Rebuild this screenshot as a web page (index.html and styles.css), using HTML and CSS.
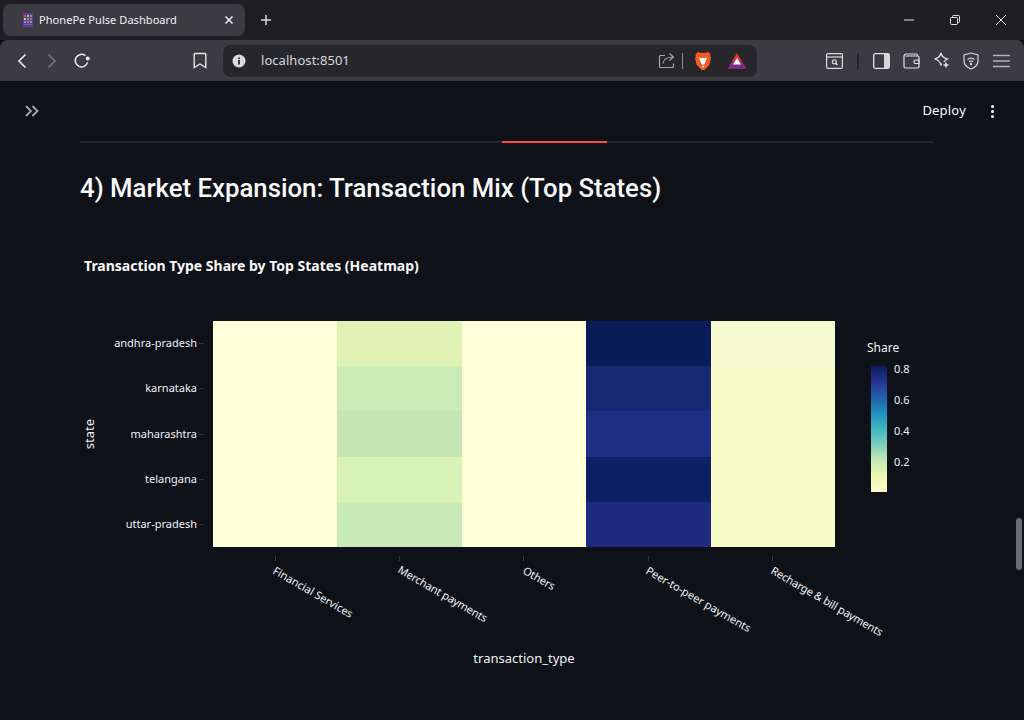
FILE: index.html
```html
<!DOCTYPE html>
<html lang="en">
<head>
    <meta charset="UTF-8">
    <meta name="viewport" content="width=device-width, initial-scale=1.0">
    <title>PhonePe Pulse Dashboard</title>
    <link rel="stylesheet" href="styles.css">
</head>
<body>

    <div class="tabstrip">
        <div class="tab">
            <svg class="favicon" width="12" height="16" viewBox="0 0 12 16">
                <rect x="1" y="1" width="10" height="14" fill="#5b3f96"/>
                <rect x="2" y="3" width="2" height="2" fill="#e8503a"/>
                <rect x="5" y="3" width="2" height="2" fill="#f0a030"/>
                <rect x="8" y="3" width="2" height="2" fill="#4aa0e0"/>
                <rect x="2" y="6" width="2" height="2" fill="#f0c030"/>
                <rect x="5" y="6" width="2" height="2" fill="#3fb0d0"/>
                <rect x="8" y="6" width="2" height="2" fill="#e8603a"/>
                <rect x="2" y="9" width="2" height="2" fill="#40a8e8"/>
                <rect x="5" y="9" width="2" height="2" fill="#e85a8a"/>
                <rect x="8" y="9" width="2" height="2" fill="#58c070"/>
                <rect x="2" y="12" width="8" height="1" fill="#7a5cb8"/>
            </svg>
            <span class="tab-title">PhonePe Pulse Dashboard</span>
            <svg class="tab-close" width="10" height="10" viewBox="0 0 10 10"><path d="M1.5 1.5l7 7M8.5 1.5l-7 7" stroke="#e8e8ea" stroke-width="1.6"/></svg>
        </div>
        <svg class="new-tab" width="12" height="12" viewBox="0 0 12 12"><path d="M6 1v10M1 6h10" stroke="#dcdcdf" stroke-width="1.5"/></svg>
        <div class="window-btns">
            <svg width="12" height="12" viewBox="0 0 12 12"><path d="M1 6h10" stroke="#e4e4e6" stroke-width="1"/></svg>
            <svg width="12" height="12" viewBox="0 0 12 12" fill="none" stroke="#e4e4e6"><rect x="1.5" y="3.5" width="7" height="7" rx="1"/><path d="M3.5 3.5v-1a1 1 0 0 1 1-1h5a1 1 0 0 1 1 1v5a1 1 0 0 1-1 1h-1"/></svg>
            <svg width="12" height="12" viewBox="0 0 12 12"><path d="M1 1l10 10M11 1L1 11" stroke="#e4e4e6" stroke-width="1"/></svg>
        </div>
    </div>

    <div class="toolbar">
        <div class="nav-btns">
            <svg width="10" height="16" viewBox="0 0 10 16" fill="none"><path d="M8.5 1.5L2 8l6.5 6.5" stroke="#eeeef0" stroke-width="1.6"/></svg>
            <svg width="10" height="16" viewBox="0 0 10 16" fill="none"><path d="M1.5 1.5L8 8l-6.5 6.5" stroke="#77777c" stroke-width="1.6"/></svg>
            <svg class="reload" width="18" height="18" viewBox="0 0 18 18" fill="none"><path d="M14.6 10.4A6.3 6.3 0 1 1 12.4 3.6" stroke="#eeeef0" stroke-width="1.5"/><circle cx="14.7" cy="6.5" r="2" fill="#eeeef0"/></svg>
        </div>
        <svg class="bookmark" width="14" height="17" viewBox="0 0 14 17" fill="none"><path d="M2 1.5h10a.8.8 0 0 1 .8.8v13.2L7 12l-5.800 3.500V2.300a.8.8 0 0 1 .8-.8z" stroke="#e4e4e6" stroke-width="1.4"/></svg>
        <div class="address">
            <svg width="14" height="14" viewBox="0 0 14 14"><circle cx="7" cy="7" r="6.500" fill="#dcdcdf"/><rect x="6.100" y="6" width="1.800" height="4.500" fill="#2a2a2f"/><rect x="6.100" y="3.400" width="1.800" height="1.700" fill="#2a2a2f"/></svg>
            <span class="url">localhost:8501</span>
            <svg class="share" width="17" height="17" viewBox="0 0 17 17" fill="none" stroke="#a6a6aa" stroke-width="1.200"><path d="M7 3.500H2.500a1 1 0 0 0-1 1v10a1 1 0 0 0 1 1h12a1 1 0 0 0 1-1v-3"/><path d="M5 11.500c.5-4 3.500-6.500 10-6.500M11.500 1.500L15.500 5l-4 3.500"/></svg>
            <span class="addr-sep"></span>
            <svg class="brave" width="18" height="20" viewBox="0 0 18 20">
                <path d="M3.500 1L6 1.800h6L14.500 1l2 2.500-.4 1.500.9 1.800-1.500 7L10.500 19H7.500L2.500 13.800 1 6.800 1.900 5 1.500 3.500z" fill="#f15a22"/>
                <path d="M5 6.500l2.500.8L9 6.800l1.500.5 2.500-.8-1 3-1.500 3.500L9 14l-1.500-1-1.500-3.500z" fill="#fff"/>
                <path d="M7.500 15.500L9 14.500l1.500 1L9 16.800z" fill="#fff"/>
            </svg>
            <svg class="bat" width="18" height="16" viewBox="0 0 18 16">
                <path d="M9 0L18 15.500H0z" fill="#e0362c"/>
                <path d="M0 15.500L4.500 8 9 11l4.500-3L18 15.500z" fill="#7b2d8e"/>
                <path d="M9 5l4 6.500H5z" fill="#fff"/>
            </svg>
        </div>
        <div class="tool-icons">
            <svg width="17" height="16" viewBox="0 0 17 16" fill="none" stroke="#dcdcdf" stroke-width="1.200"><rect x=".6" y=".6" width="15.800" height="14.800" rx="1.500"/><path d="M.6 4h15.800"/><circle cx="8.300" cy="8.800" r="2"/><path d="M9.800 10.300l1.700 1.700" stroke-width="1.500"/></svg>
            <span class="tool-sep"></span>
            <svg width="17" height="16" viewBox="0 0 17 16"><rect x=".7" y=".7" width="15.600" height="14.600" rx="1.500" fill="none" stroke="#e4e4e6" stroke-width="1.300"/><rect x="11" y="1" width="5" height="14" fill="#d6d6d8"/></svg>
            <svg width="17" height="16" viewBox="0 0 17 16" fill="none" stroke="#e4e4e6" stroke-width="1.200"><path d="M2.500 3h12a1.500 1.500 0 0 1 1.500 1.500v9a1.500 1.500 0 0 1-1.500 1.500h-12A1.500 1.500 0 0 1 1 13.500V3a2 2 0 0 1 2-2h10a1.500 1.500 0 0 1 1.500 1.500"/><rect x="11" y="7" width="5" height="3.500" rx="1.500"/></svg>
            <svg width="17" height="17" viewBox="0 0 17 17" fill="none" stroke="#e4e4e6" stroke-width="1.200"><path d="M8 1c.8 3.500 2.500 5.200 6.500 6-2 1-3 1.700-3.700 3M8 1C7.200 4.500 5.500 6.200 1.500 7c4 .8 5.700 2.500 6.500 6.500.2-.8.400-1.500.6-2"/><path d="M13 10.500v5M10.500 13h5" stroke-width="1.600"/></svg>
            <svg width="16" height="18" viewBox="0 0 16 18" fill="none" stroke="#d4d4d6" stroke-width="1.200"><path d="M8 1l7 2v6c0 4-3 6.500-7 8-4-1.500-7-4-7-8V3z"/><path d="M4.500 7.500c2-1.600 5-1.600 7 0M6 9.700c1.200-.9 2.800-.9 4 0"/><circle cx="8" cy="12" r=".6" fill="#d4d4d6"/></svg>
            <svg class="menu-icon" width="17" height="14" viewBox="0 0 17 14"><path d="M0 1.500h17M0 7h17M0 12.500h17" stroke="#b4b4b8" stroke-width="1.600"/></svg>
        </div>
    </div>

    <div class="page">
        <div class="st-header">
            <svg width="16" height="12" viewBox="0 0 16 12" fill="none" stroke="#a6a8ad" stroke-width="1.800"><path d="M2 1l5 5-5 5M8.500 1l5 5-5 5"/></svg>
            <div class="st-actions">
                <span class="deploy">Deploy</span>
                <span class="kebab"><i></i><i></i><i></i></span>
            </div>
        </div>

        <div class="main">
            <div class="divider"><span class="divider-red"></span></div>
            <h2 class="section-title">4) Market Expansion: Transaction Mix (Top States)</h2>

            <svg class="chart" width="854" height="450" viewBox="80 230 854 450">
                <defs>
                    <linearGradient id="ylgnbu" x1="0" y1="1" x2="0" y2="0">
                        <stop offset="0" stop-color="#f8fccb"/>
                        <stop offset="0.125" stop-color="#edf8b1"/>
                        <stop offset="0.25" stop-color="#c7e9b4"/>
                        <stop offset="0.375" stop-color="#7fcdbb"/>
                        <stop offset="0.5" stop-color="#41b6c4"/>
                        <stop offset="0.625" stop-color="#1d91c0"/>
                        <stop offset="0.75" stop-color="#225ea8"/>
                        <stop offset="0.875" stop-color="#253494"/>
                        <stop offset="1" stop-color="#081d58"/>
                    </linearGradient>
                </defs>

                <text class="chart-title" x="84" y="271">Transaction Type Share by Top States (Heatmap)</text>

                <!-- column 1 -->
                <rect x="213" y="321" width="124" height="226" fill="#ffffd9"/>
                <!-- column 2 -->
                <rect x="337" y="321" width="125" height="45" fill="#dff2b3"/>
                <rect x="337" y="366" width="125" height="45" fill="#ccecb6"/>
                <rect x="337" y="411" width="125" height="46" fill="#c5e6b3"/>
                <rect x="337" y="457" width="125" height="45" fill="#d8f2b5"/>
                <rect x="337" y="502" width="125" height="45" fill="#c8eab7"/>
                <!-- column 3 -->
                <rect x="462" y="321" width="124" height="226" fill="#ffffd9"/>
                <!-- column 4 -->
                <rect x="586" y="321" width="125" height="45" fill="#081d58"/>
                <rect x="586" y="366" width="125" height="45" fill="#172973"/>
                <rect x="586" y="411" width="125" height="46" fill="#1e2f86"/>
                <rect x="586" y="457" width="125" height="45" fill="#0c2163"/>
                <rect x="586" y="502" width="125" height="45" fill="#1e2b81"/>
                <!-- column 5 -->
                <rect x="711" y="321" width="124" height="45" fill="#f7fbd0"/>
                <rect x="711" y="366" width="124" height="181" fill="#f8fcc9"/>

                <!-- y axis -->
                <g class="ticks">
                    <path d="M199 343.500h5M199 388.500h5M199 434.500h5M199 479.500h5M199 524.500h5"/>
                    <path d="M275.500 556v5M399.500 556v5M523.500 556v5M648.500 556v5M772.500 556v5"/>
                </g>
                <g class="tick-labels" text-anchor="end">
                    <text x="197" y="347">andhra-pradesh</text>
                    <text x="197" y="392">karnataka</text>
                    <text x="197" y="438">maharashtra</text>
                    <text x="197" y="483">telangana</text>
                    <text x="197" y="528">uttar-pradesh</text>
                </g>
                <text class="axis-label" transform="translate(94 434) rotate(-90)" text-anchor="middle">state</text>

                <!-- x axis -->
                <g class="tick-labels">
                    <text transform="translate(272 573) rotate(30)">Financial Services</text>
                    <text transform="translate(397 572) rotate(30)" textLength="101">Merchant payments</text>
                    <text transform="translate(522 573) rotate(30)" textLength="35">Others</text>
                    <text transform="translate(645 573) rotate(30)">Peer-to-peer payments</text>
                    <text transform="translate(770 573) rotate(30)" textLength="127">Recharge &amp; bill payments</text>
                </g>
                <text class="axis-label" x="524" y="663" text-anchor="middle">transaction_type</text>

                <!-- colorbar -->
                <text class="legend-title" x="867" y="352">Share</text>
                <rect x="871" y="366" width="16" height="126" fill="url(#ylgnbu)"/>
                <g class="tick-labels">
                    <text x="894" y="373">0.8</text>
                    <text x="894" y="404">0.6</text>
                    <text x="894" y="435">0.4</text>
                    <text x="894" y="466">0.2</text>
                </g>
            </svg>
        </div>

        <div class="scroll-thumb"></div>
    </div>

</body>
</html>
```

FILE: styles.css
```css
html, body {
    margin: 0;
    padding: 0;
    height: 720px;
    overflow: hidden;
    background-color: #0e1117;
    font-family: "Noto Sans", sans-serif;
}
.tabstrip {
    height: 40px;
    background-color: #1f1f23;
    display: flex;
    align-items: center;
    box-sizing: border-box;
    padding-left: 3px;
}
.tab {
    width: 242px;
    height: 32px;
    box-sizing: border-box;
    background-color: #3b3b41;
    border-radius: 8px;
    display: flex;
    align-items: center;
    padding: 0 11px 0 19px;
    color: #f0f0f2;
}
.tab-title {
    margin-left: 5px;
    padding-bottom: 2px;
    font-size: 11px;
    letter-spacing: .06px;
    flex: 1;
}
.new-tab {
    margin-left: 15px;
}
.window-btns {
    margin-left: auto;
    display: flex;
    gap: 34px;
    padding-right: 17px;
}
.toolbar {
    height: 41px;
    box-sizing: border-box;
    background-color: #3b3b41;
    border-radius: 8px 8px 0 0;
    display: flex;
    align-items: center;
    position: relative;
}
.nav-btns {
    display: flex;
    align-items: center;
    gap: 20px;
    padding-left: 17px;
}
.nav-btns .reload {
    margin-left: -4px;
}
.bookmark {
    margin-left: 102px;
}
.address {
    margin-left: 16px;
    width: 534px;
    height: 32px;
    box-sizing: border-box;
    background-color: #26262b;
    border-radius: 8px;
    display: flex;
    align-items: center;
    padding-left: 9px;
}
.url {
    margin-left: 15px;
    padding-bottom: 2px;
    font-size: 13px;
    color: #d8d8da;
    flex: 1;
    letter-spacing: .05px;
}
.share {
    margin-right: 7px;
}
.addr-sep {
    width: 1px;
    height: 16px;
    background-color: #8a8a8e;
    margin-right: 11px;
}
.brave {
    margin-right: 16px;
}
.bat {
    margin-right: 11px;
}
.tool-icons {
    margin-left: 69px;
    display: flex;
    align-items: center;
    gap: 13px;
}
.tool-sep {
    width: 2px;
    height: 16px;
    background-color: #232327;
    margin: 0 1px;
}
.menu-icon {
    margin-left: 1px;
}
.page {
    height: 639px;
    background-color: #0e1117;
    position: relative;
    overflow: hidden;
}
.st-header {
    height: 60px;
    box-sizing: border-box;
    display: flex;
    align-items: center;
    padding: 0 30px 0 24px;
}
.st-actions {
    margin-left: auto;
    display: flex;
    align-items: center;
    gap: 25px;
}
.deploy {
    font-size: 13px;
    letter-spacing: .2px;
    padding-bottom: 2px;
    color: #fafafa;
}
.kebab {
    display: flex;
    flex-direction: column;
    gap: 2px;
}
.kebab i {
    width: 3px;
    height: 3px;
    border-radius: 50%;
    background-color: #fafafa;
}
.main {
    padding: 0 90px 0 80px;
}
.divider {
    height: 2px;
    background-color: #26272e;
    padding-left: 422px;
    margin-top: 0;
}
.divider-red {
    display: block;
    width: 105px;
    height: 2px;
    background-color: #ff4b4b;
}
.section-title {
    margin: 27px 0 0;
    font-family: Roboto, "Noto Sans", sans-serif;
    font-size: 25.75px;
    line-height: 36px;
    font-weight: 500;
    color: #fafafa;
}
.chart {
    display: block;
    margin-top: 24px;
}
.chart text {
    font-family: "Noto Sans", sans-serif;
}
.chart-title {
    font-size: 14px;
    font-weight: 700;
    fill: #fafafa;
}
.tick-labels text {
    font-size: 11px;
    fill: #f0f2f6;
}
.axis-label {
    font-size: 13px;
    fill: #f0f2f6;
}
.legend-title {
    font-size: 12px;
    fill: #f0f2f6;
}
.ticks path {
    stroke: #34363c;
    stroke-width: 1;
    fill: none;
}
.scroll-thumb {
    position: absolute;
    right: 2px;
    top: 437px;
    width: 6px;
    height: 52px;
    border-radius: 3px;
    background-color: #6b6c70;
}
```
